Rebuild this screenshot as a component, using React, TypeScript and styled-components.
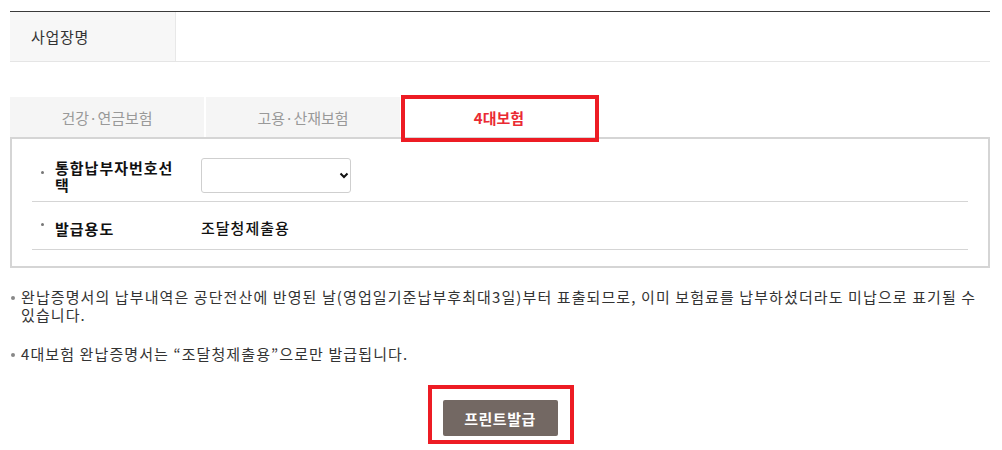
import React from 'react';
import styled, { createGlobalStyle } from 'styled-components';

const GlobalStyle = createGlobalStyle`
  body {
    margin: 0;
    background: #fff;
    font-family: 'Noto Sans CJK KR', 'Noto Sans', sans-serif;
    color: #333;
  }
`;

const Page = styled.div`
  width: 980px;
  margin-left: 10px;
  padding-top: 11px;
  padding-bottom: 20px;
`;

const InfoTable = styled.div`
  display: grid;
  grid-template-columns: 166px 1fr;
  border-top: 1px solid #3a3a3a;
  border-bottom: 1px solid #e5e5e5;
`;

const InfoLabel = styled.div`
  background: #f7f7f7;
  border-right: 1px solid #e8e8e8;
  height: 49px;
  display: flex;
  align-items: center;
  padding-left: 21px;
  font-size: 15px;
  letter-spacing: 0.7px;
  color: #333;
`;

const InfoValue = styled.div`
  height: 49px;
`;

const Tabs = styled.div`
  display: grid;
  grid-template-columns: repeat(5, 196px);
  margin-top: 35px;
`;

const Tab = styled.div<{ $active?: boolean }>`
  position: relative;
  height: 40px;
  display: flex;
  align-items: center;
  justify-content: center;
  font-size: 15px;
  border-right: 2px solid #fff;
  background: ${({ $active }) => ($active ? '#fff' : '#f5f5f5')};
  color: ${({ $active }) => ($active ? '#ea2a33' : '#999')};
  font-weight: ${({ $active }) => ($active ? 700 : 400)};

  ${({ $active }) =>
    $active &&
    `
    &::after {
      content: '';
      position: absolute;
      top: -2px;
      left: -1px;
      right: -3px;
      bottom: -5px;
      border: 4px solid #ed1c24;
      z-index: 2;
    }
  `}
`;

const Box = styled.div`
  border: 2px solid #d5d5d5;
  padding: 6px 20px 16px;
`;

const Row = styled.div`
  display: flex;
  align-items: center;
  padding: 13px 0 8px;
  border-bottom: 1px solid #d5d5d5;
`;

const Label = styled.div`
  position: relative;
  width: 169px;
  box-sizing: border-box;
  padding: 0 21px 0 23px;
  font-size: 15px;
  line-height: 17px;
  letter-spacing: 1px;
  font-weight: 700;
  color: #111;

  &::before {
    content: '';
    position: absolute;
    left: 9px;
    top: calc(50% - 5px);
    width: 3px;
    height: 3px;
    border-radius: 50%;
    background: #777;
  }
`;

const Value = styled.div`
  font-size: 15px;
  line-height: 26px;
  letter-spacing: 1px;
  font-weight: 500;
  color: #111;
`;

const SelectWrap = styled.div`
  position: relative;
  width: 150px;
  height: 35px;
`;

const Select = styled.select`
  appearance: none;
  width: 100%;
  height: 100%;
  border: 1px solid #cfcfcf;
  border-radius: 3px;
  background: #fff;
  font-size: 14px;
  font-family: inherit;
`;

const Chevron = styled.svg`
  position: absolute;
  right: 2px;
  top: 14px;
  pointer-events: none;
`;

const Notes = styled.ul`
  list-style: none;
  margin: 20px 0 0;
  padding: 0;
`;

const Note = styled.li`
  position: relative;
  padding-left: 11px;
  font-size: 15px;
  line-height: 18px;
  letter-spacing: 1.1px;
  color: #333;
  margin-bottom: 21px;

  &::before {
    content: '';
    position: absolute;
    left: 1px;
    top: 8px;
    width: 4px;
    height: 4px;
    border-radius: 50%;
    background: #888;
  }
`;

const Actions = styled.div`
  display: flex;
  justify-content: center;
  margin-top: 37px;
`;

const ButtonWrap = styled.div`
  position: relative;
  display: flex;

  &::after {
    content: '';
    position: absolute;
    top: -15px;
    left: -15px;
    right: -16px;
    bottom: -8px;
    border: 4px solid #ed1c24;
    pointer-events: none;
  }
`;

const PrintButton = styled.button`
  display: block;
  width: 115px;
  height: 36px;
  border: none;
  border-radius: 2px;
  background: #736863;
  color: #fff;
  font-family: inherit;
  font-size: 15px;
  font-weight: 700;
  letter-spacing: 0.5px;
  cursor: pointer;
`;

export default function App() {
  return (
    <>
      <GlobalStyle />
      <Page>
        <InfoTable>
          <InfoLabel>사업장명</InfoLabel>
          <InfoValue />
        </InfoTable>

        <Tabs>
          <Tab>건강·연금보험</Tab>
          <Tab>고용·산재보험</Tab>
          <Tab $active>4대보험</Tab>
        </Tabs>

        <Box>
          <Row>
            <Label>통합납부자번호선택</Label>
            <SelectWrap>
              <Select>
                <option value=""></option>
              </Select>
              <Chevron width="10" height="7" viewBox="0 0 10 7">
                <path d="M1.5 1.5 L5 5 L8.5 1.5" fill="none" stroke="#111" strokeWidth="2" />
              </Chevron>
            </SelectWrap>
          </Row>
          <Row>
            <Label>발급용도</Label>
            <Value>조달청제출용</Value>
          </Row>
        </Box>

        <Notes>
          <Note>
            완납증명서의 납부내역은 공단전산에 반영된 날(영업일기준납부후최대3일)부터 표출되므로, 이미 보험료를 납부하셨더라도 미납으로 표기될 수 있습니다.
          </Note>
          <Note>4대보험 완납증명서는 “조달청제출용”으로만 발급됩니다.</Note>
        </Notes>

        <Actions>
          <ButtonWrap>
            <PrintButton>프린트발급</PrintButton>
          </ButtonWrap>
        </Actions>
      </Page>
    </>
  );
}
